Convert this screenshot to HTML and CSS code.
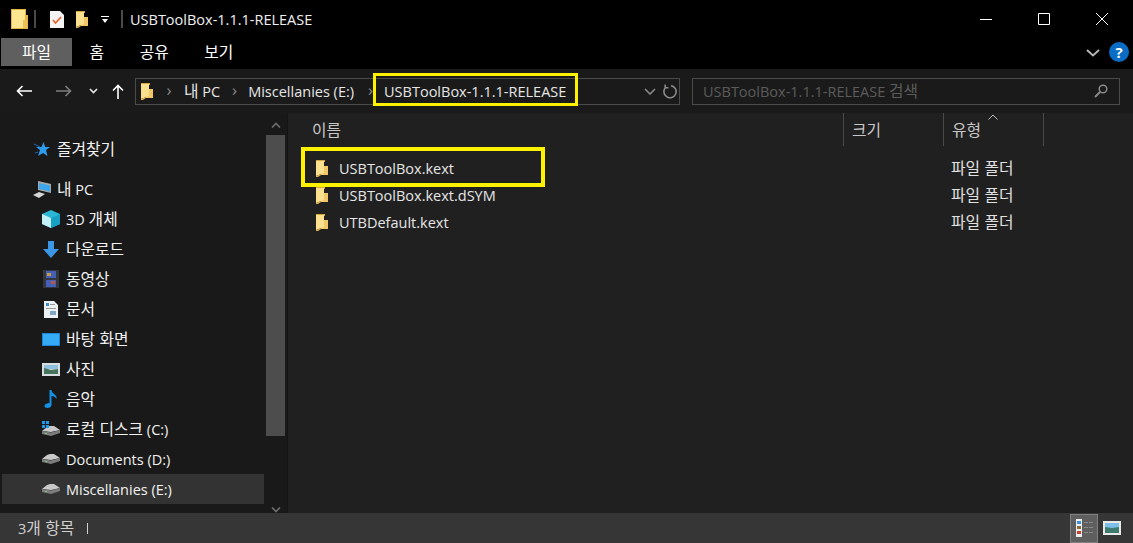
FILE: index.html
```html
<!DOCTYPE html>
<html lang="ko">
<head>
    <meta charset="UTF-8">
    <meta name="viewport" content="width=device-width, initial-scale=1.0">
    <title>USBToolBox-1.1.1-RELEASE</title>
    <link rel="stylesheet" href="styles.css">
</head>
<body>
  <svg class="defs" width="0" height="0">
    <symbol id="folder" viewBox="0 0 12 17">
      <path fill="#d9a63e" d="M0 0h9v2H0z"/>
      <path fill="#f3c768" d="M8 6h4v9H5v-3h3z"/>
      <path fill="#fbe08f" d="M0 1h8v12l-4 1.500L0 16z"/>
      <path fill="#e5b14c" d="M0 16l5-2v1l-3 2H0z"/>
    </symbol>
    <symbol id="drive" viewBox="0 0 18 10">
      <path fill="#c9c9c9" d="M0 5l5-4 3-1h4l6 4-9 2z"/>
      <path fill="#7c7c7c" d="M0 5l9 1.500L18 4v3l-9 3-9-2z"/>
      <path fill="#6fcf7a" d="M3 7h2v1H3z"/>
    </symbol>
  </svg>

  <div class="window">
    <!-- 제목 표시줄 -->
    <header class="titlebar">
      <svg class="title-folder" width="17" height="20" viewBox="0 0 17 20">
        <path fill="#e3b545" d="M0 0h15v6h2v14H0z"/>
        <path fill="#fde591" d="M1 1h13v18H1z"/>
        <path fill="#efc055" d="M12 11h4v8h-4z"/>
      </svg>
      <span class="sep"></span>
      <svg class="qa-note" width="14" height="17" viewBox="0 0 14 17">
        <path fill="#f4f4f4" d="M0 0h10l4 4v13H0z"/>
        <path fill="none" stroke="#e8622c" stroke-width="1.700" d="M3 9l2.500 3L11 6"/>
      </svg>
      <svg class="qa-folder" width="12" height="17"><use href="#folder"/></svg>
      <svg class="qa-down" width="8" height="7" viewBox="0 0 8 7">
        <path fill="#fff" d="M0 0h8v1H0zM1 3h6L4 7z"/>
      </svg>
      <span class="sep"></span>
      <span class="title-text">USBToolBox-1.1.1-RELEASE</span>
      <div class="controls">
        <svg width="12" height="12" viewBox="0 0 12 12"><path stroke="#fff" d="M0 6.500h12"/></svg>
        <svg width="12" height="12" viewBox="0 0 12 12"><path fill="none" stroke="#fff" d="M.5.500h11v11H.5z"/></svg>
        <svg width="12" height="12" viewBox="0 0 12 12"><path fill="none" stroke="#fff" d="M0 0l12 12M12 0L0 12"/></svg>
      </div>
    </header>

    <!-- 리본 탭 -->
    <nav class="tabs">
      <a class="tab active ko">파일</a>
      <a class="tab ko">홈</a>
      <a class="tab ko">공유</a>
      <a class="tab ko">보기</a>
      <svg class="ribbon-toggle" width="14" height="8" viewBox="0 0 14 8">
        <path fill="none" stroke="#b5b5b5" stroke-width="2" d="M1 1l6 5.500L13 1"/>
      </svg>
      <span class="help">?</span>
    </nav>

    <!-- 주소 표시줄 -->
    <div class="navbar">
      <div class="nav-btns">
        <svg width="16" height="12" viewBox="0 0 16 12"><path fill="none" stroke="#fff" stroke-width="1.600" d="M16 6H1.500M6.500 1l-5 5 5 5"/></svg>
        <svg width="16" height="12" viewBox="0 0 16 12"><path fill="none" stroke="#7d7d7d" stroke-width="1.600" d="M0 6h14.500M9.500 1l5 5-5 5"/></svg>
        <svg width="9" height="6" viewBox="0 0 9 6"><path fill="none" stroke="#e8e8e8" stroke-width="1.600" d="M1 1l3.500 3.500L8 1"/></svg>
        <svg width="12" height="15" viewBox="0 0 12 15"><path fill="none" stroke="#fff" stroke-width="1.600" d="M6 15V1.500M1 6.500l5-5 5 5"/></svg>
      </div>
      <div class="address">
        <svg class="addr-folder" width="12" height="17"><use href="#folder"/></svg>
        <span class="crumb-arrow">&#8250;</span>
        <span class="crumb"><span class="ko">내</span> PC</span>
        <span class="crumb-arrow">&#8250;</span>
        <span class="crumb crumb-drive">Miscellanies (E:)</span>
        <span class="crumb-arrow">&#8250;</span>
        <span class="crumb">USBToolBox-1.1.1-RELEASE</span>
        <svg class="addr-drop" width="12" height="7" viewBox="0 0 12 7"><path fill="none" stroke="#8a8a8a" stroke-width="1.600" d="M1 1l5 5 5-5"/></svg>
        <svg class="addr-refresh" width="15" height="15" viewBox="0 0 14 14"><path fill="none" stroke="#8a8a8a" stroke-width="1.500" d="M8.500 1.500a5.700 5.700 0 1 1-5 1.500M3 .5v3h3"/></svg>
      </div>
      <div class="search">
        <span>USBToolBox-1.1.1-RELEASE <span class="ko">검색</span></span>
        <svg width="14" height="14" viewBox="0 0 14 14"><circle cx="9" cy="5" r="3.800" fill="none" stroke="#8a8a8a" stroke-width="1.500"/><path stroke="#8a8a8a" stroke-width="2" d="M6 8l-5 5"/></svg>
      </div>
    </div>

    <main class="main">
      <!-- 탐색 창 -->
      <aside class="sidebar">
        <ul class="tree">
          <li class="item top fav">
            <svg width="16" height="15" viewBox="0 0 16 15"><path fill="#2f9bef" d="M9.500 0l1.700 5H16l-4 3 1.500 6-4.500-3-5 3 2-6-4-3h5.500z"/><path stroke="#1c6aa8" d="M0 2l6 3M1 11l3-1"/></svg>
            <span class="ko">즐겨찾기</span>
          </li>
          <li class="item top pc">
            <svg width="18" height="17" viewBox="0 0 18 17"><path fill="#a8a8a8" d="M5 0l13 3v9L5 9z"/><path fill="#3da5ee" d="M6 2l11 2.500v6L6 8z"/><path fill="#d5d5d5" d="M0 14l6-3 6 2-6 4z"/></svg>
            <span><span class="ko">내</span> PC</span>
          </li>
          <li class="item">
            <svg width="18" height="18" viewBox="0 0 18 18"><path fill="#2bb6d6" d="M9 0l9 4v10l-9 4-9-4V4z"/><path fill="#c2f0f7" d="M0 4l9 4v10l-9-4z"/><path fill="#17a0c4" d="M9 8l9-4v10l-9 4z"/></svg>
            <span>3D <span class="ko">개체</span></span>
          </li>
          <li class="item">
            <svg width="16" height="17" viewBox="0 0 16 17"><path fill="#3c96e6" d="M5 0h6v8h5l-8 9-8-9h5z"/></svg>
            <span class="ko">다운로드</span>
          </li>
          <li class="item">
            <svg width="16" height="18" viewBox="0 0 16 18"><path fill="#33363d" d="M0 0h16v18H0z"/><path fill="#4460b8" d="M3 1h10v7H3z"/><path fill="#c59a3e" d="M4 3h4v3H4z"/><path fill="#4460b8" d="M3 10h10v7H3z"/><path fill="#b8563e" d="M8 11h4v3H8z"/></svg>
            <span class="ko">동영상</span>
          </li>
          <li class="item">
            <svg width="14" height="17" viewBox="0 0 14 17"><path fill="#eef1f4" d="M0 0h10l4 4v13H0z"/><path fill="#3a8fd8" d="M2 2h3v3H2z"/><path fill="#9a9a9a" d="M6 3h5v1H6zM2 7h10v1H2z"/><path fill="#7fa6c4" d="M6 10h6v4H6z"/></svg>
            <span class="ko">문서</span>
          </li>
          <li class="item">
            <svg width="18" height="13" viewBox="0 0 18 13"><path fill="#1d84d8" d="M0 0h18v13H0z"/><path fill="#35aaf5" d="M1 1h16v11H1z"/></svg>
            <span class="ko">바탕 화면</span>
          </li>
          <li class="item">
            <svg width="18" height="13" viewBox="0 0 18 13"><path fill="#d8dde0" d="M0 0h18v13H0z"/><path fill="#8fc0dd" d="M2 2h14v4H2z"/><path fill="#46735e" d="M2 5l7 2 7-1v5H2z"/></svg>
            <span class="ko">사진</span>
          </li>
          <li class="item">
            <svg width="13" height="18" viewBox="0 0 13 18"><path fill="#1491e3" d="M5 0h2c0 4 6 4 5 9-1-2-3-3-5-3v9c0 2-2 3-4 3s-3-1-3-2c0-2 3-3 5-3z"/></svg>
            <span class="ko">음악</span>
          </li>
          <li class="item">
            <svg width="18" height="16" viewBox="0 0 18 16">
              <use href="#drive" y="5" width="18" height="10"/>
              <path fill="#1e9be8" d="M0 0h3v3H0zM4 0h3v3H4zM0 4h3v3H0zM4 4h3v3H4z"/>
            </svg>
            <span><span class="ko">로컬 디스크</span> (C:)</span>
          </li>
          <li class="item">
            <svg width="18" height="10"><use href="#drive"/></svg>
            <span>Documents (D:)</span>
          </li>
          <li class="item selected">
            <svg width="18" height="10"><use href="#drive"/></svg>
            <span>Miscellanies (E:)</span>
          </li>
        </ul>
        <div class="scrollbar">
          <svg width="10" height="6" viewBox="0 0 10 6"><path fill="none" stroke="#6e6e6e" stroke-width="1.600" d="M1 5.500l4-4 4 4"/></svg>
          <div class="thumb"></div>
          <svg width="10" height="6" viewBox="0 0 10 6"><path fill="none" stroke="#6e6e6e" stroke-width="1.600" d="M1 .5l4 4 4-4"/></svg>
        </div>
      </aside>

      <!-- 파일 목록 -->
      <section class="files">
        <div class="columns">
          <div class="col col-name ko">이름</div>
          <div class="col col-size ko">크기</div>
          <div class="col col-type ko">유형
            <svg class="sort" width="10" height="6" viewBox="0 0 10 6"><path fill="none" stroke="#bbb" d="M.5 5.500L5 1l4.500 4.500"/></svg>
          </div>
        </div>
        <div class="row">
          <svg width="12" height="17"><use href="#folder"/></svg>
          <span class="file-name">USBToolBox.kext</span>
          <span class="file-type ko">파일 폴더</span>
        </div>
        <div class="row">
          <svg width="12" height="17"><use href="#folder"/></svg>
          <span class="file-name">USBToolBox.kext.dSYM</span>
          <span class="file-type ko">파일 폴더</span>
        </div>
        <div class="row">
          <svg width="12" height="17"><use href="#folder"/></svg>
          <span class="file-name">UTBDefault.kext</span>
          <span class="file-type ko">파일 폴더</span>
        </div>
      </section>
    </main>

    <footer class="status">
      <span><span class="num">3</span><span class="ko">개 항목</span></span>
      <span class="status-sep"></span>
      <div class="views">
        <span class="view active">
          <svg width="6" height="18" viewBox="0 0 6 18"><path fill="#eee" d="M0 0h6v18H0z"/><path fill="#3a8fd8" d="M1 2h4v3H1z"/><path fill="#8a6a3a" d="M1 7h4v3H1z"/><path fill="#c8402c" d="M1 12h4v3H1z"/></svg>
          <svg width="10" height="18" viewBox="0 0 10 18"><path fill="#8a8a8a" d="M1 3h4v1H1zM6 3h4v1H6zM1 8h4v1H1zM6 8h4v1H6zM1 13h4v1H1zM6 13h4v1H6z"/></svg>
        </span>
        <span class="view">
          <svg width="18" height="14" viewBox="0 0 18 14"><path fill="#e8e8e8" d="M0 0h18v14H0z"/><path fill="#7cc0ea" d="M2 2h14v5H2z"/><path fill="#3f7a70" d="M2 6l7 1 7-1v6H2z"/></svg>
        </span>
      </div>
    </footer>

    <!-- 노란 강조 상자 -->
    <div class="mark mark-path"></div>
    <div class="mark mark-file"></div>
  </div>
</body>
</html>
```

FILE: styles.css
```css
/* 전체 */
html, body {
    margin: 0;
    padding: 0;
    background: #000;
}

.defs {
    position: absolute;
}

.window {
    position: relative;
    width: 1133px;
    height: 543px;
    overflow: hidden;
    display: flex;
    flex-direction: column;
    font-family: "Open Sans", "Noto Sans CJK KR", sans-serif;
    font-size: 14.5px;
    color: #fff;
    background: #000;
}

/* 한글은 맑은 고딕 크기에 맞춰 조금 크게 */
.ko {
    font-family: "Noto Sans CJK KR", sans-serif;
    font-size: 15.8px;
    line-height: 1;
}

svg {
    display: block;
    flex: none;
}

/* 제목 표시줄 */
.titlebar {
    height: 38px;
    display: flex;
    align-items: center;
    padding-left: 11px;
    flex: none;
}

.sep {
    width: 2px;
    height: 18px;
    background: #4a4a4a;
    margin-left: 6px;
}

.qa-note {
    margin-left: 14px;
}

.qa-folder {
    margin-left: 12px;
}

.qa-down {
    margin-left: 13px;
}

.sep + .title-text {
    margin-left: 7px;
}

.qa-down + .sep {
    margin-left: 12px;
}

.title-text {
    color: #f0f0f0;
}

.controls {
    margin-left: auto;
    margin-right: 25px;
    display: flex;
    gap: 46px;
}

/* 리본 탭 */
.tabs {
    height: 31px;
    flex: none;
    display: flex;
    align-items: flex-start;
    padding-left: 1px;
}

.tab {
    height: 28px;
    line-height: 27px;
    padding: 0 18px 0 17.500px;
    color: #fff;
}

.tab.active {
    background: #5f5f5f;
    padding: 0 21px;
    margin-right: 0;
}

.ribbon-toggle {
    margin: 11px 0 0 auto;
}

.help {
    width: 20px;
    height: 20px;
    border-radius: 50%;
    background: #0a6cc4;
    margin: 4px 4px 0 9px;
    text-align: center;
    line-height: 20px;
    font-weight: 700;
    font-size: 15px;
}

/* 주소 표시줄 */
.navbar {
    height: 44px;
    flex: none;
    background: #1a1a1a;
    display: flex;
    align-items: center;
    padding-left: 16px;
    color: #e6e6e6;
}

.nav-btns {
    width: 119px;
    display: flex;
    align-items: center;
}

.nav-btns svg:nth-child(2) {
    margin-left: 24px;
}

.nav-btns svg:nth-child(3) {
    margin-left: 17px;
}

.nav-btns svg:nth-child(4) {
    margin-left: 14px;
}

.address, .search {
    height: 27px;
    box-sizing: border-box;
    border: 1px solid #4b4b4b;
    display: flex;
    align-items: center;
}

.address {
    width: 545px;
    padding-left: 5px;
}

.crumb-arrow {
    color: #8a8a8a;
    font-size: 17px;
    line-height: 20px;
    width: 32px;
    text-align: center;
    margin-top: -2px;
}

.crumb-arrow + .crumb {
    margin-left: -1px;
}

.crumb + .crumb-arrow {
    width: 29px;
}

.crumb-drive {
    margin-right: 2px;
}

.addr-drop {
    margin-left: auto;
}

.addr-refresh {
    margin: 0 2px 0 6px;
}

.search {
    width: 428px;
    margin-left: 12px;
    padding: 0 11px 0 10px;
    justify-content: space-between;
    color: #5c5c5c;
}

/* 본문 */
.main {
    flex: 1;
    min-height: 0;
    display: flex;
}

.sidebar {
    width: 287px;
    flex: none;
    display: flex;
    background: #191919;
    border-right: 1px solid #141414;
}

.tree {
    list-style: none;
    width: 262px;
    margin: 21px 0 0 2px;
    padding: 0;
    flex: none;
}

.item {
    height: 30px;
    display: flex;
    align-items: center;
    padding-left: 40px;
    gap: 6px;
    color: #f2f2f2;
}

.item svg {
    width: 18px;
}

.item.top {
    padding-left: 31px;
    margin-bottom: 10px;
    gap: 6px;
}

.item.top + .item.top {
    margin-bottom: 0;
}

.item.selected {
    background: #333;
}

.scrollbar {
    width: 19px;
    margin-left: 2px;
    display: flex;
    flex-direction: column;
    align-items: center;
    padding-top: 9px;
    box-sizing: border-box;
}

.thumb {
    width: 19px;
    height: 301px;
    background: #4d4d4d;
    margin: 7px 0 71px;
}

/* 파일 목록 */
.files {
    flex: 1;
    background: #202020;
}

.columns {
    height: 33px;
    display: flex;
    color: #c8c8c8;
}

.col {
    position: relative;
    border-right: 1px solid #4a4a4a;
    box-sizing: border-box;
    line-height: 33px;
    padding-left: 8px;
}

.col-name {
    width: 556px;
    padding-left: 24px;
}

.col-size,
.col-type {
    width: 100px;
}

.sort {
    position: absolute;
    left: 44px;
    top: 1px;
}

.row {
    height: 27px;
    display: flex;
    align-items: center;
    padding-left: 28px;
    color: #e6e6e6;
}

.columns + .row {
    margin-top: 9px;
}

.file-name {
    width: 612px;
    margin-left: 11px;
}

.file-type {
    color: #e0e0e0;
    margin-top: -2px;
}

/* 상태 표시줄 */
.status {
    height: 30px;
    flex: none;
    background: #363636;
    display: flex;
    align-items: center;
    padding-left: 18px;
    color: #d0d0d0;
}

.status-sep {
    width: 1px;
    height: 11px;
    background: #d0d0d0;
    margin-left: 13px;
}

.views {
    margin-left: auto;
    margin-right: 10px;
    display: flex;
    align-items: center;
    gap: 3px;
}

.view {
    width: 22px;
    height: 29px;
    display: flex;
    align-items: center;
    justify-content: center;
}

.view.active {
    width: 28px;
    box-sizing: border-box;
    background: #5f5f5f;
    border: 1px solid #808080;
    gap: 1px;
}

/* 강조 상자 */
.mark {
    position: absolute;
    box-sizing: border-box;
    border: 3px solid #fff200;
}

.mark-path {
    left: 373px;
    top: 73px;
    width: 205px;
    height: 33px;
}

.mark-file {
    left: 301px;
    top: 147px;
    width: 244px;
    height: 40px;
    border-width: 4px;
}
```
